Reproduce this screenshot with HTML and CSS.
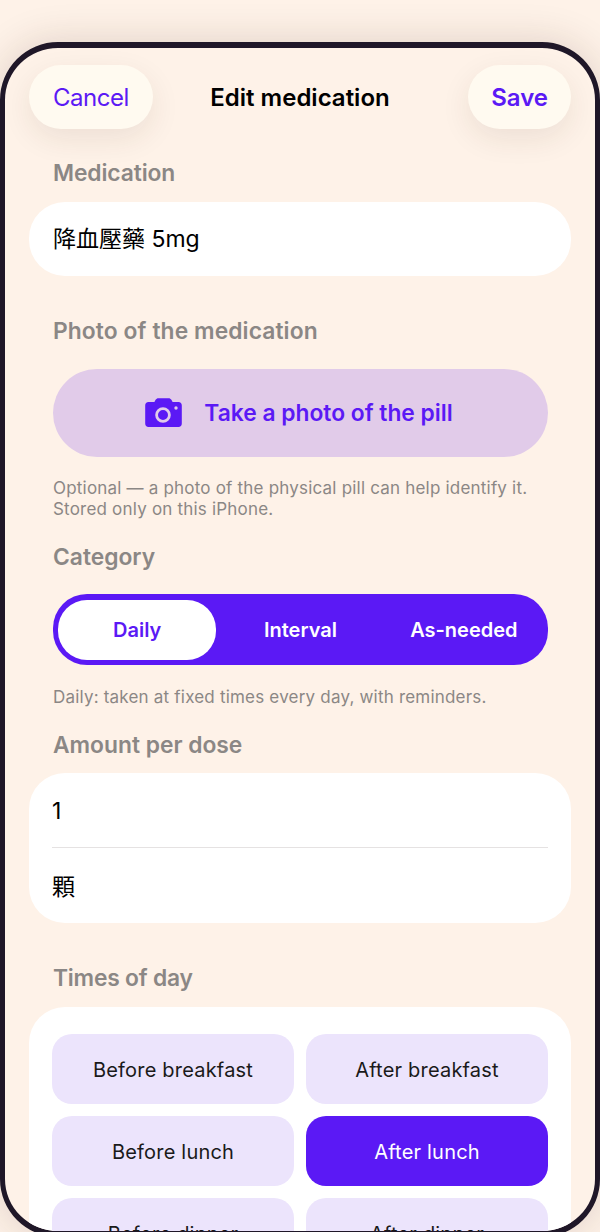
FILE: index.html
```html
<!DOCTYPE html>
<html lang="en">
<head>
<meta charset="utf-8">
<title>Edit medication</title>
<link rel="stylesheet" href="styles.css">
</head>
<body>
<div class="device">
  <header class="nav">
    <div class="nav-left"><button class="pill cancel">Cancel</button></div>
    <h1 class="title">Edit medication</h1>
    <div class="nav-right"><button class="pill save">Save</button></div>
  </header>
  <h2 class="label label-med">Medication</h2>
  <div class="card field"><span class="shift">降血壓藥 5mg</span></div>
  <h2 class="label label-photo">Photo of the medication</h2>
  <button class="photo">
    <svg class="cam" viewBox="0 0 37 29" width="37" height="29" aria-hidden="true">
      <path fill="#5b19f5" d="M3.6 4h5.8l1.2-2.2C11.2.8 12.2.2 13.4.2h10.2c1.2 0 2.2.6 2.8 1.6L27.6 4h5.8c2.2 0 3.4 1.3 3.4 3.4v18.2c0 2.1-1.2 3.4-3.4 3.4H3.6C1.4 29 .2 27.7.2 25.6V7.4C.2 5.3 1.4 4 3.6 4z"/>
      <circle cx="18" cy="17" r="6.4" fill="none" stroke="#e1cbe9" stroke-width="2.8"/>
      <circle cx="31" cy="10" r="1.7" fill="#e1cbe9"/>
    </svg>
    <span>Take a photo of the pill</span>
  </button>
  <p class="hint hint-photo">Optional — a photo of the physical pill can help identify it.<br>Stored only on this iPhone.</p>
  <h2 class="label label-cat">Category</h2>
  <div class="segment">
    <div class="seg on">Daily</div>
    <div class="seg">Interval</div>
    <div class="seg">As-needed</div>
  </div>
  <p class="hint hint-cat">Daily: taken at fixed times every day, with reminders.</p>
  <h2 class="label label-amt">Amount per dose</h2>
  <div class="card amount">
    <div class="row row-top">1</div>
    <div class="rule"></div>
    <div class="row">顆</div>
  </div>
  <h2 class="label label-times">Times of day</h2>
  <div class="card times">
    <div class="chip">Before breakfast</div>
    <div class="chip">After breakfast</div>
    <div class="chip">Before lunch</div>
    <div class="chip sel">After lunch</div>
    <div class="chip">Before dinner</div>
    <div class="chip">After dinner</div>
  </div>
</div>
</body>
</html>
```
FILE: styles.css
```css
* { box-sizing: border-box; }
html, body { margin: 0; height: 1232px; overflow: hidden; }
body {
  background: #fef2e8;
  padding-top: 42px;
  font-family: Inter, "Noto Sans CJK TC", sans-serif;
  color: #000;
}
.device {
  width: 600px;
  height: 1195px;
  border-style: solid;
  border-color: #1f1728;
  border-width: 6px 5px;
  border-radius: 58px;
  background: #fef2e8;
  box-shadow: 0 0 40px rgba(60, 30, 20, .16);
  overflow: hidden;
  padding: 17px 24px 0;
}
.nav { display: grid; grid-template-columns: 1fr auto 1fr; align-items: center; height: 64px; }
.nav-right { text-align: right; }
.pill {
  height: 64px;
  border: 0;
  border-radius: 32px;
  background: #fffaf0;
  box-shadow: 0 10px 30px rgba(70, 40, 20, .09);
  color: #5b19f5;
  font: 400 24px Inter, sans-serif;
  padding: 0 24px;
}
.cancel { letter-spacing: -.5px; }
.save { font-weight: 600; padding: 0 23px; }
.title { margin: 0; font-size: 24px; font-weight: 600; line-height: 29px; }
.label { margin: 0 0 0 24px; font-size: 22.8px; line-height: 28px; font-weight: 600; color: #8b8785; }
.label-med { margin-top: 30px; letter-spacing: -.1px; }
.label-photo { margin-top: 41px; letter-spacing: .1px; }
.label-cat { margin-top: 23px; }
.label-amt { margin-top: 23px; }
.label-times { margin-top: 41px; letter-spacing: -.2px; }
.card { background: #fff; border-radius: 36px; }
.field { margin-top: 15px; height: 74px; padding: 0 24px; display: flex; align-items: center; font-size: 23px; }
.shift { margin-top: -4px; }
.photo {
  display: flex;
  align-items: center;
  justify-content: center;
  gap: 22px;
  width: 495px;
  height: 88px;
  margin: 24px 0 0 24px;
  padding: 0 3px 2px 0;
  border: 0;
  border-radius: 44px;
  background: #e1cbe9;
  color: #5b19f5;
  font: 600 22.8px Inter, sans-serif;
}
.cam { flex: none; }
.hint { margin: 0 0 0 24px; font-size: 17px; line-height: 21px; letter-spacing: .2px; color: #8b8785; }
.hint-photo { margin-top: 21px; }
.hint-cat { margin-top: 22px; }
.segment {
  display: grid;
  grid-template-columns: repeat(3, 1fr);
  width: 495px;
  height: 71px;
  margin: 23px 0 0 24px;
  padding: 6px 2.5px 5px;
  border-radius: 34px;
  background: #5b19f5;
}
.seg {
  display: flex;
  align-items: center;
  justify-content: center;
  border-radius: 29px;
  color: #fff;
  font-size: 20px;
  font-weight: 600;
}
.seg.on { background: #fff; color: #5b19f5; margin: 0 2.5px; }
.amount { margin-top: 14px; height: 150px; display: flex; flex-direction: column; }
.row { height: 74px; padding: 0 23px; display: flex; align-items: center; font-size: 23px; }
.row-top { padding-top: 2px; }
.rule { height: 1px; margin: 0 23px; background: #e5e2e2; flex: none; }
.times {
  margin-top: 15px;
  padding: 27px 23px;
  display: grid;
  grid-template-columns: 1fr 1fr;
  grid-auto-rows: 70px;
  gap: 12px;
  height: 400px;
}
.chip {
  display: flex;
  align-items: center;
  justify-content: center;
  padding-top: 2px;
  border-radius: 20px;
  background: #ece4fc;
  font-size: 20px;
  font-weight: 400;
  letter-spacing: .2px;
  color: #1a1a1a;
}
.chip.sel { background: #5b19f5; color: #fff; }
```
